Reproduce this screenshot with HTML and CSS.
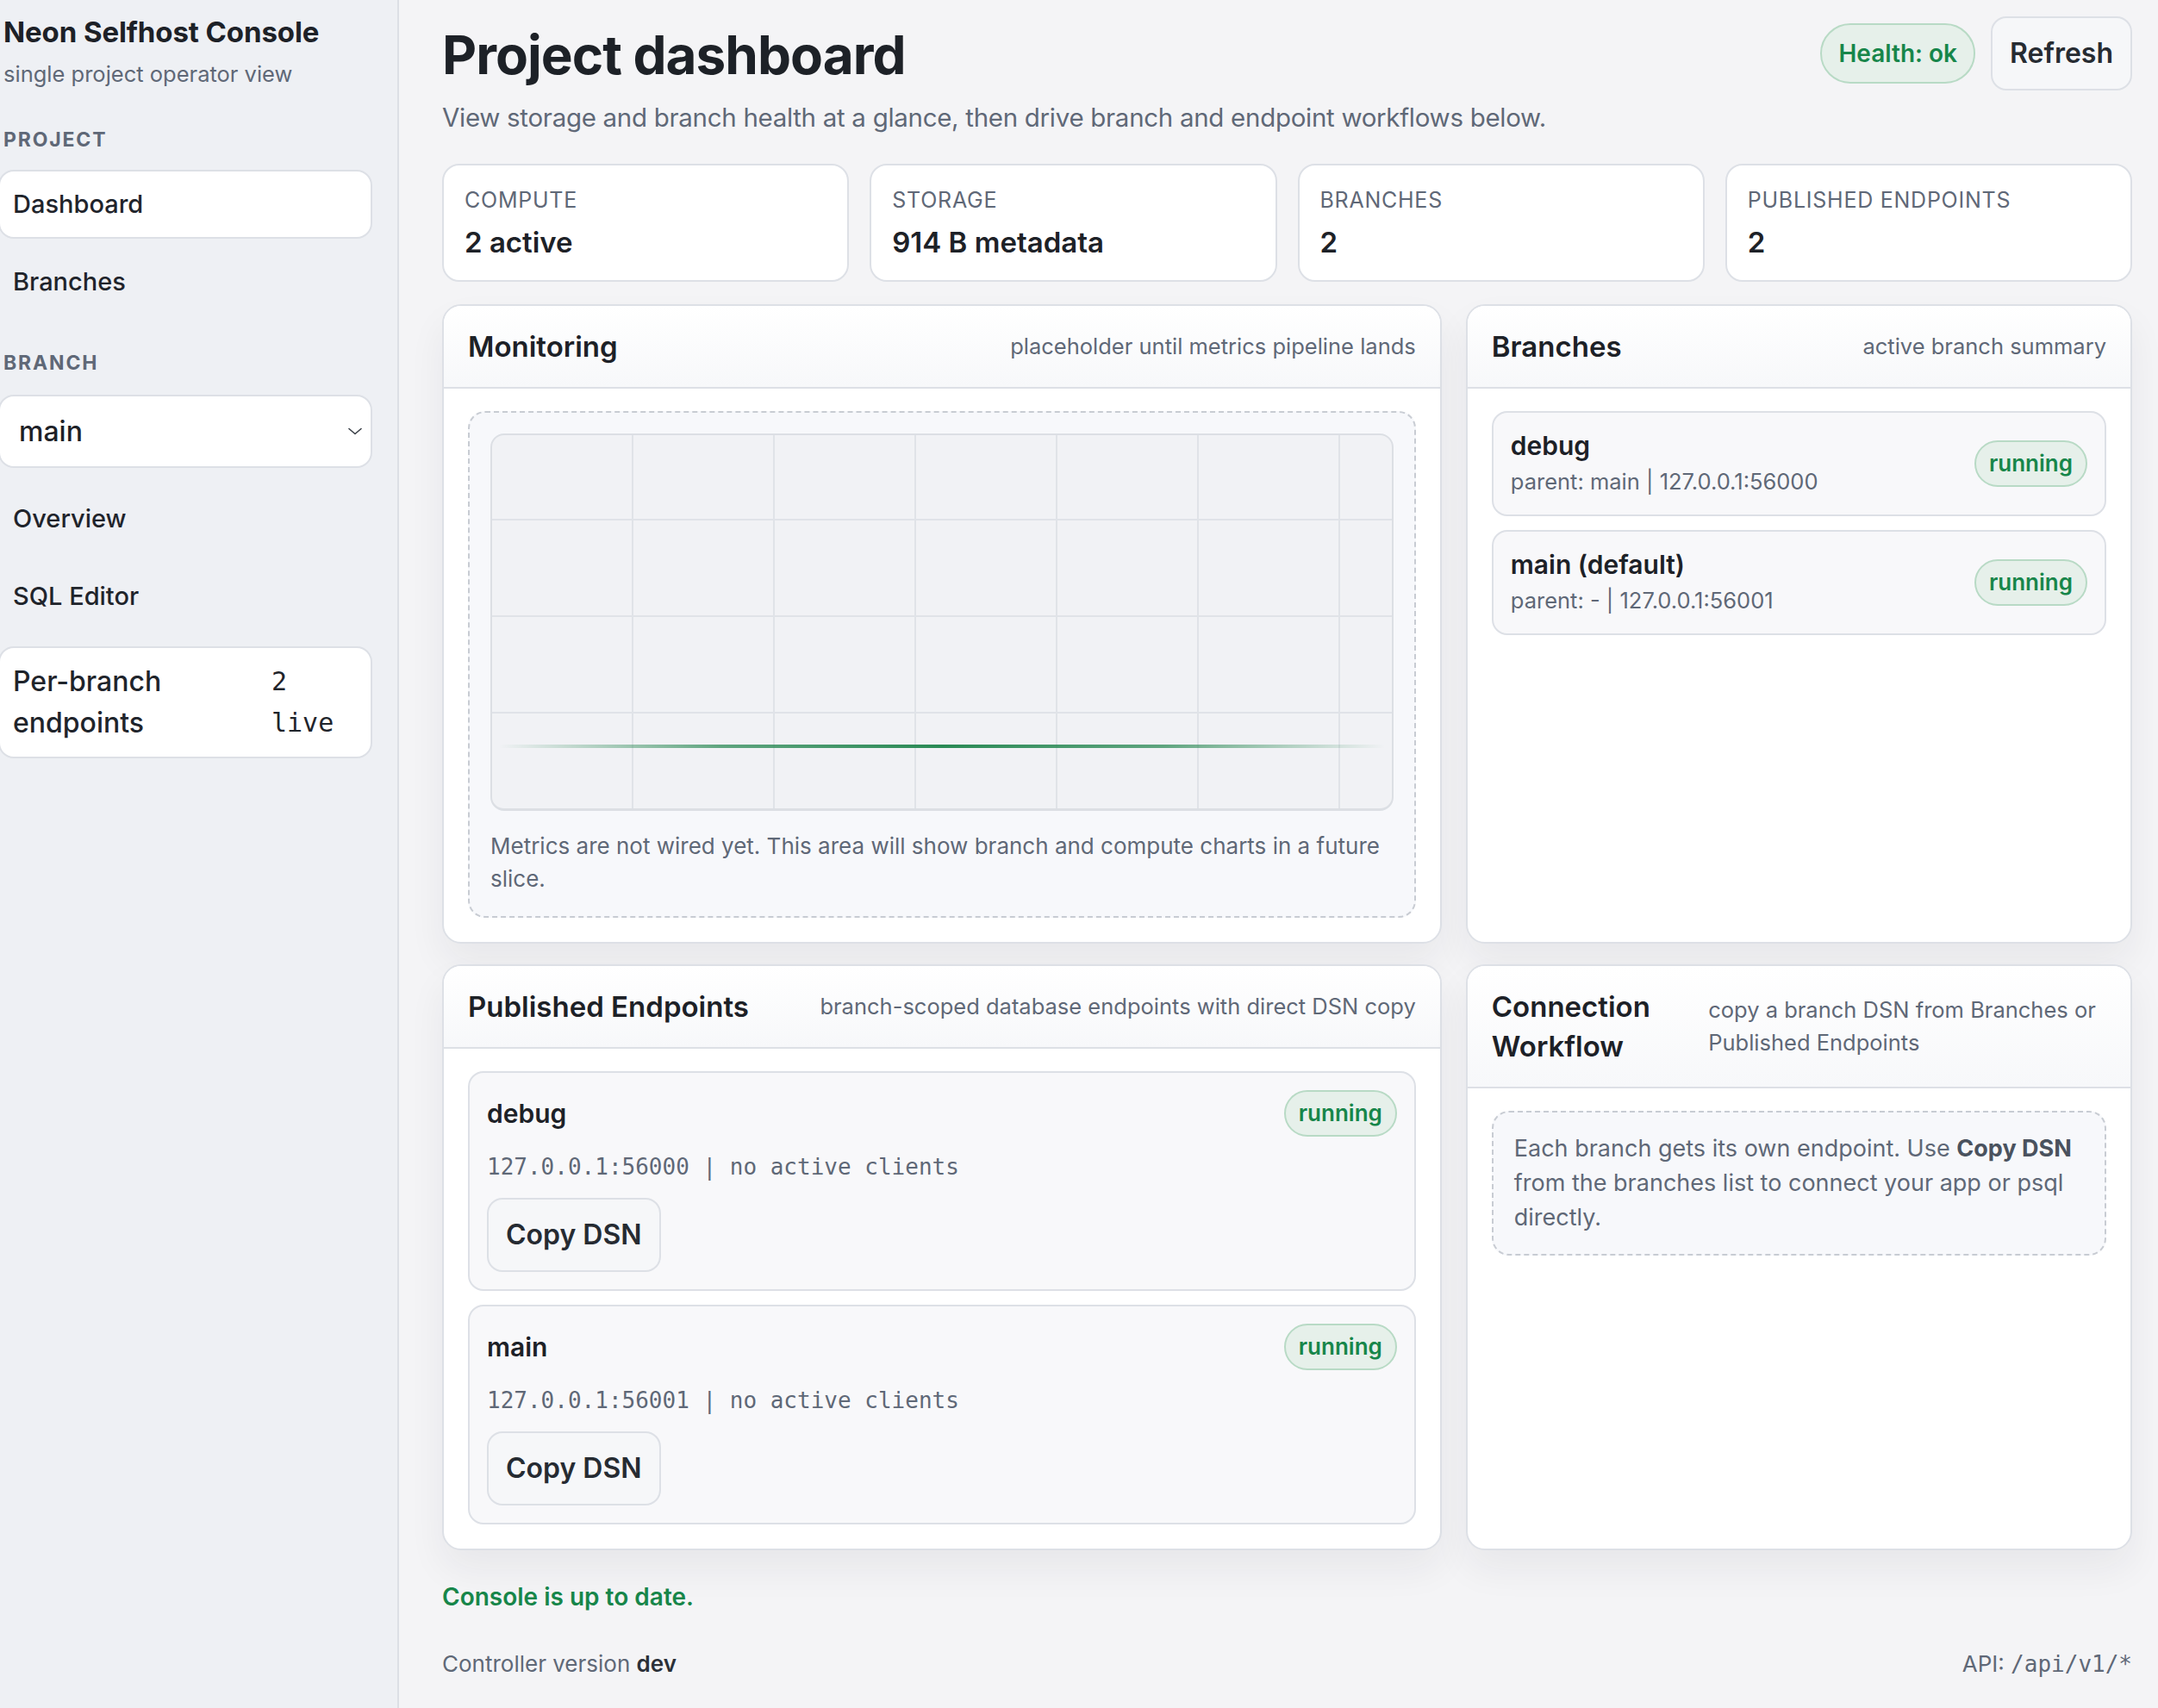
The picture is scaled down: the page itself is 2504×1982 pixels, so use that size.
FILE: index.html
```html
<!DOCTYPE html>
<html lang="en">
<head>
    <meta charset="UTF-8">
    <meta name="viewport" content="width=device-width, initial-scale=1.0">
    <title>Neon Selfhost Console</title>
    <link rel="stylesheet" href="styles.css">
</head>
<body>
    <div class="app">
        <aside class="sidebar">
            <div class="brand-name">Neon Selfhost Console</div>
            <div class="brand-sub">single project operator view</div>

            <div class="nav-label">Project</div>
            <nav class="nav">
                <a class="nav-item active" href="#">Dashboard</a>
                <a class="nav-item" href="#">Branches</a>
            </nav>

            <div class="nav-label branch-label">Branch</div>
            <div class="branch-select">
                <span>main</span>
                <svg width="16" height="9" viewBox="0 0 16 9"><path d="M1 1.5l7 6 7-6" fill="none" stroke="#3a3f47" stroke-width="1.6" stroke-linecap="round" stroke-linejoin="round"/></svg>
            </div>

            <nav class="nav nav-branch">
                <a class="nav-item" href="#">Overview</a>
                <a class="nav-item" href="#">SQL Editor</a>
                <div class="nav-item active endpoints-item">
                    <span class="endpoints-label">Per-branch endpoints</span>
                    <code class="endpoints-count">2 live</code>
                </div>
            </nav>
        </aside>

        <main class="content">
            <header class="page-header">
                <div class="title-block">
                    <h1>Project dashboard</h1>
                    <p class="lede">View storage and branch health at a glance, then drive branch and endpoint workflows below.</p>
                </div>
                <div class="header-actions">
                    <span class="chip chip-lg">Health: ok</span>
                    <button class="btn" type="button">Refresh</button>
                </div>
            </header>

            <section class="stats">
                <div class="stat-card">
                    <div class="stat-label">Compute</div>
                    <div class="stat-value">2 active</div>
                </div>
                <div class="stat-card">
                    <div class="stat-label">Storage</div>
                    <div class="stat-value">914 B metadata</div>
                </div>
                <div class="stat-card">
                    <div class="stat-label">Branches</div>
                    <div class="stat-value">2</div>
                </div>
                <div class="stat-card">
                    <div class="stat-label">Published Endpoints</div>
                    <div class="stat-value">2</div>
                </div>
            </section>

            <section class="panels">
                <div class="panel">
                    <div class="panel-head">
                        <h2>Monitoring</h2>
                        <span class="panel-note">placeholder until metrics pipeline lands</span>
                    </div>
                    <div class="panel-body">
                        <div class="dashed-box">
                            <div class="chart">
                                <div class="chart-line"></div>
                            </div>
                            <p class="chart-caption">Metrics are not wired yet. This area will show branch and compute charts in a future slice.</p>
                        </div>
                    </div>
                </div>

                <div class="panel">
                    <div class="panel-head">
                        <h2>Branches</h2>
                        <span class="panel-note">active branch summary</span>
                    </div>
                    <div class="panel-body item-list">
                        <div class="branch-item">
                            <div>
                                <div class="item-name">debug</div>
                                <div class="item-meta">parent: main | 127.0.0.1:56000</div>
                            </div>
                            <span class="chip">running</span>
                        </div>
                        <div class="branch-item">
                            <div>
                                <div class="item-name">main (default)</div>
                                <div class="item-meta">parent: - | 127.0.0.1:56001</div>
                            </div>
                            <span class="chip">running</span>
                        </div>
                    </div>
                </div>

                <div class="panel">
                    <div class="panel-head">
                        <h2>Published Endpoints</h2>
                        <span class="panel-note">branch-scoped database endpoints with direct DSN copy</span>
                    </div>
                    <div class="panel-body item-list">
                        <div class="endpoint-item">
                            <div class="endpoint-top">
                                <div class="item-name">debug</div>
                                <span class="chip">running</span>
                            </div>
                            <div class="endpoint-addr">127.0.0.1:56000 | no active clients</div>
                            <button class="btn" type="button">Copy DSN</button>
                        </div>
                        <div class="endpoint-item">
                            <div class="endpoint-top">
                                <div class="item-name">main</div>
                                <span class="chip">running</span>
                            </div>
                            <div class="endpoint-addr">127.0.0.1:56001 | no active clients</div>
                            <button class="btn" type="button">Copy DSN</button>
                        </div>
                    </div>
                </div>

                <div class="panel">
                    <div class="panel-head">
                        <h2>Connection Workflow</h2>
                        <span class="panel-note">copy a branch DSN from Branches or Published Endpoints</span>
                    </div>
                    <div class="panel-body">
                        <div class="dashed-box workflow-note">
                            Each branch gets its own endpoint. Use <strong>Copy DSN</strong> from the branches list to connect your app or psql directly.
                        </div>
                    </div>
                </div>
            </section>

            <p class="status">Console is up to date.</p>

            <footer class="footer">
                <span>Controller version <strong>dev</strong></span>
                <span>API: <code>/api/v1/*</code></span>
            </footer>
        </main>
    </div>
</body>
</html>
```

FILE: styles.css
```css
* {
    box-sizing: border-box;
}

body {
    margin: 0;
    font-family: "Inter", "Noto Sans", sans-serif;
    background-color: #f4f4f6;
    color: #1d2127;
    overflow: hidden;
}

code {
    font-family: "DejaVu Sans Mono", "Liberation Mono", monospace;
}

.app {
    display: grid;
    grid-template-columns: 463px 1fr;
    min-height: 100vh;
}

/* Sidebar */
.sidebar {
    background-color: #eef0f4;
    border-right: 2px solid #dcdfe5;
    padding: 17px 29px 0 4px;
    overflow: hidden;
}

.brand-name {
    font-size: 33px;
    font-weight: 700;
    line-height: 40px;
    letter-spacing: -0.1px;
}

.brand-sub {
    margin-top: 11px;
    font-size: 25.5px;
    line-height: 36px;
    color: #5f6877;
}

.nav-label {
    margin-top: 42px;
    margin-bottom: 19px;
    font-size: 23px;
    line-height: 32px;
    font-weight: 700;
    letter-spacing: 0.08em;
    text-transform: uppercase;
    color: #5f6877;
}

.branch-label {
    margin-top: 38px;
    margin-bottom: 21px;
}

.nav {
    display: flex;
    flex-direction: column;
    gap: 10px;
}

.nav-item {
    display: block;
    margin-left: -6px;
    padding: 15px 15px;
    border: 2px solid transparent;
    border-radius: 18px;
    font-size: 29px;
    font-weight: 500;
    line-height: 46px;
    color: #1f242b;
    text-decoration: none;
}

.nav-item.active {
    background-color: #fff;
    border-color: #dde0e6;
}

.branch-select {
    display: flex;
    align-items: center;
    justify-content: space-between;
    margin-left: -6px;
    height: 85px;
    padding: 0 10px 0 22px;
    background-color: #fff;
    border: 2px solid #dde0e6;
    border-radius: 18px;
    font-size: 32px;
    font-weight: 500;
}

.nav-branch {
    margin-top: 19px;
}

.endpoints-item {
    display: flex;
    margin-top: 8px;
    font-size: 32px;
    line-height: 48px;
}

.endpoints-label {
    flex: 1;
    padding-right: 20px;
}

.endpoints-count {
    width: 100px;
    font-size: 30px;
    font-weight: 500;
    color: #1f242b;
}

/* Main */
.content {
    padding: 19px 30px 35px 50px;
    min-width: 0;
}

.page-header {
    display: flex;
    justify-content: space-between;
    align-items: flex-start;
}

h1 {
    margin: 9px 0 0;
    font-size: 62px;
    font-weight: 700;
    line-height: 72px;
    letter-spacing: -1px;
}

.lede {
    margin: 15px 0 0;
    font-size: 29.5px;
    line-height: 42px;
    color: #5f6877;
    letter-spacing: -0.3px;
}

.header-actions {
    display: flex;
    align-items: center;
    gap: 18px;
}

.chip {
    display: inline-block;
    padding: 7px 15px;
    border: 2px solid #b8dac5;
    border-radius: 999px;
    background-color: #e6f0ea;
    color: #17864a;
    font-size: 26px;
    font-weight: 600;
    line-height: 36px;
    white-space: nowrap;
}

.chip-lg {
    padding: 13px 19px;
    font-size: 28px;
    line-height: 40px;
}

.btn {
    padding: 20px 20px;
    border: 2px solid #dde0e6;
    border-radius: 18px;
    background-color: #f6f7f9;
    color: #262b32;
    font-family: inherit;
    font-size: 32px;
    font-weight: 600;
    line-height: 42px;
    cursor: pointer;
}

.stats {
    display: grid;
    grid-template-columns: repeat(4, 1fr);
    gap: 24px;
    margin-top: 33px;
}

.stat-card {
    padding: 23px 24px 24px;
    background-color: #fff;
    border: 2px solid #dde0e6;
    border-radius: 20px;
}

.stat-label {
    font-size: 25px;
    line-height: 34px;
    letter-spacing: 0.03em;
    text-transform: uppercase;
    color: #5f6877;
}

.stat-value {
    margin-top: 12px;
    font-size: 33px;
    font-weight: 600;
    line-height: 40px;
}

/* Panels */
.panels {
    display: grid;
    grid-template-columns: 3fr 2fr;
    gap: 24px 28px;
    margin-top: 26px;
}

.panel {
    background-color: #fff;
    border: 2px solid #dde0e6;
    border-radius: 22px;
    box-shadow: 0 22px 44px rgba(30, 35, 45, 0.06);
    overflow: hidden;
}

.panel-head {
    display: flex;
    justify-content: space-between;
    align-items: center;
    gap: 24px;
    padding: 24px 28px;
    border-bottom: 2px solid #dde0e6;
    background: linear-gradient(#ffffff, #f7f8fa);
}

.panel-head h2 {
    margin: 0;
    font-size: 33px;
    font-weight: 600;
    line-height: 46px;
}

.panel-note {
    font-size: 25.5px;
    line-height: 38px;
    color: #5f6877;
}

.panel-body {
    padding: 26px 28px 28px;
}

.item-list {
    display: flex;
    flex-direction: column;
    gap: 16px;
}

.dashed-box {
    padding: 24px;
    border: 2px dashed #c8ccd3;
    border-radius: 20px;
    background-color: #f7f8fb;
}

.chart {
    position: relative;
    height: 438px;
    border: 2px solid #dcdfe4;
    border-bottom-width: 3px;
    border-radius: 16px;
    background-color: #f1f2f5;
    background-image:
        linear-gradient(90deg, transparent 162px, #e0e3e8 162px, #e0e3e8 164px),
        linear-gradient(180deg, #e0e3e8 2px, transparent 2px);
    background-size: 164px 100%, 100% 112px;
    background-position: 0 0, 0 100%;
}

.chart-line {
    position: absolute;
    left: 8px;
    right: 8px;
    bottom: 70px;
    height: 4px;
    border-radius: 2px;
    background: linear-gradient(90deg, rgba(46, 139, 87, 0), rgba(46, 139, 87, 0.75) 25%, #2a8a55 50%, rgba(46, 139, 87, 0.75) 75%, rgba(46, 139, 87, 0));
}

.chart-caption {
    margin: 22px 0 0;
    font-size: 26px;
    line-height: 38px;
    color: #5f6877;
}

.branch-item {
    display: flex;
    justify-content: space-between;
    align-items: center;
    padding: 20px;
    background-color: #f8f8fa;
    border: 2px solid #dde0e6;
    border-radius: 18px;
}

.item-name {
    font-size: 30px;
    font-weight: 600;
    line-height: 36px;
}

.item-meta {
    margin-top: 6px;
    font-size: 25.5px;
    line-height: 36px;
    color: #5f6877;
}

.endpoint-item {
    padding: 20px;
    background-color: #f8f8fa;
    border: 2px solid #dde0e6;
    border-radius: 18px;
}

.endpoint-top {
    display: flex;
    justify-content: space-between;
    align-items: center;
}

.endpoint-addr {
    margin: 17px 0 18px;
    font-family: "DejaVu Sans Mono", "Liberation Mono", monospace;
    font-size: 26px;
    line-height: 36px;
    color: #5f6877;
}

.workflow-note {
    padding: 22px 24px;
    font-size: 27px;
    line-height: 40px;
    color: #5f6877;
}

.workflow-note strong {
    font-weight: 700;
    color: #4a525e;
}

.status {
    margin: 34px 0 0;
    font-size: 28px;
    font-weight: 600;
    line-height: 40px;
    color: #17864a;
}

.footer {
    display: flex;
    justify-content: space-between;
    margin-top: 40px;
    font-size: 26px;
    line-height: 36px;
    color: #5f6877;
}

.footer strong {
    font-weight: 600;
    color: #2b3038;
}

.footer code {
    font-size: 26px;
}
```
